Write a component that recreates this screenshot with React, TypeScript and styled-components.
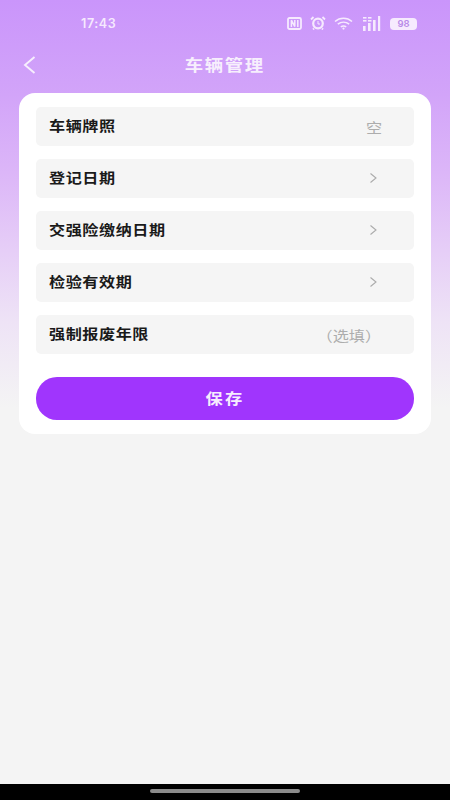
import React from "react";
import styled, { createGlobalStyle } from "styled-components";

const Global = createGlobalStyle`
  html, body { margin: 0; padding: 0; background: #000; }
  * { box-sizing: border-box; }
  body { font-family: "Inter", "Noto Sans CJK SC", sans-serif; }
`;

const Screen = styled.div`
  width: 450px;
  height: 800px;
  display: flex;
  flex-direction: column;
  overflow: hidden;
`;

const Page = styled.div`
  flex: 1;
  display: flex;
  flex-direction: column;
  background: linear-gradient(180deg, #ca95fb 0%, #d2a4f9 12%, #dcb6f8 22%, #e6cef7 32%, #eee3f6 41%, #f4f4f4 52%, #f4f4f4 100%);
`;

const StatusBar = styled.div`
  height: 46px;
  display: flex;
  align-items: center;
  justify-content: space-between;
  padding: 0 33px 0 81px;
  color: #f6eafe;
`;

const Time = styled.span`
  font-size: 12.5px;
  font-weight: 600;
  letter-spacing: 0.6px;
`;

const StatusIcons = styled.div`
  display: flex;
  align-items: center;
  gap: 8px;
`;

const Battery = styled.span`
  width: 27px;
  height: 12px;
  margin-top: 1px;
  border-radius: 4px;
  background: #f6eafe;
  color: #b98be8;
  font-size: 9.5px;
  font-weight: 600;
  line-height: 12px;
  text-align: center;
`;

const NavBar = styled.div`
  height: 38px;
  display: flex;
  align-items: center;
  justify-content: center;
  position: relative;
`;

const BackButton = styled.button`
  position: absolute;
  left: 23px;
  top: 9px;
  padding: 0;
  border: 0;
  background: none;
  display: flex;
`;

const Title = styled.h1`
  margin: 0;
  padding-bottom: 2px;
  color: #f7effd;
  font-size: 16px;
  font-weight: 600;
  letter-spacing: 1.4px;
  transform: scaleX(1.15);
`;

const Card = styled.div`
  margin: 9px 19px 0;
  padding: 14px 17px;
  background: #fff;
  border-radius: 16px;
  display: flex;
  flex-direction: column;
  gap: 13px;
`;

const Row = styled.div`
  height: 39px;
  padding: 0 13px;
  background: #f5f5f5;
  border-radius: 5px;
  display: flex;
  align-items: center;
  justify-content: space-between;
`;

const Label = styled.span`
  padding-bottom: 4px;
  color: #1a1a1a;
  font-size: 14px;
  font-weight: 600;
  letter-spacing: 0.5px;
  transform: scaleX(1.15);
  transform-origin: left center;
`;

const Placeholder = styled.span<{ $right: number }>`
  color: #adadad;
  font-size: 14px;
  margin-right: ${(p) => p.$right}px;
  transform: scaleX(1.15);
  transform-origin: right center;
`;

const Chevron = styled.svg`
  margin: 0 23px 2px 0;
`;

const SaveButton = styled.button`
  margin-top: 10px;
  padding-bottom: 3px;
  height: 43px;
  border: 0;
  border-radius: 21px;
  background: #a035fd;
  color: #f6ecfe;
  font-family: inherit;
  font-size: 15px;
  font-weight: 700;
`;

const SaveLabel = styled.span`
  display: inline-block;
  letter-spacing: 2px;
  transform: scaleX(1.15);
`;

const NavStrip = styled.div`
  height: 16px;
  background: #000;
  display: flex;
  justify-content: center;
  padding-top: 5px;
`;

const HomeBar = styled.div`
  width: 150px;
  height: 3.5px;
  border-radius: 2px;
  background: #8a8a8a;
`;

const ChevronRight = () => (
  <Chevron width="9" height="12" viewBox="0 0 9 12" fill="none">
    <path d="M1.5 1.5 7 6l-5.5 4.5" stroke="#ababab" strokeWidth="1.1" />
  </Chevron>
);

export default function App() {
  return (
    <Screen>
      <Global />
      <Page>
        <StatusBar>
          <Time>17:43</Time>
          <StatusIcons>
            <svg width="15" height="13" viewBox="0 0 15 13" fill="none" stroke="#f6eafe" strokeWidth="1.8">
              <rect x="1" y="1" width="13" height="11" rx="1.5" />
              <path d="M4.4 10V3.2l3.4 6.4V3M10.8 3v7" strokeWidth="1.5" />
            </svg>
            <svg width="16" height="14" viewBox="0 0 16 14" fill="none" stroke="#f6eafe">
              <circle cx="8" cy="7.5" r="4.8" strokeWidth="2.2" />
              <path d="M8 5v3h2" strokeWidth="1" />
              <path d="M1 3.5 3.5 1M15 3.5 12.5 1M4 12.5l-1 1M12 12.5l1 1" strokeWidth="1.8" />
            </svg>
            <svg width="20" height="13" viewBox="0 0 20 13" fill="none" stroke="#f6eafe" strokeWidth="1.5">
              <path d="M1 4.5C6 .2 13 .2 18 4.5M3.8 7.2c3.4-2.7 8-2.7 11.4 0M6.8 9.8c1.8-1.2 3.6-1.2 5.4 0" />
              <circle cx="9.5" cy="11.6" r="1.1" fill="#f6eafe" stroke="none" />
            </svg>
            <svg width="20" height="15" viewBox="0 0 20 15" fill="#f6eafe">
              <rect x="1" y="10" width="2.6" height="5" />
              <rect x="6" y="7" width="2.6" height="8" />
              <rect x="11" y="4" width="2.6" height="11" />
              <rect x="16" y="0" width="2.2" height="15" />
              <rect x="1" y="1" width="3.5" height="1.6" />
              <rect x="6" y="1" width="3.5" height="1.6" />
              <rect x="1" y="4" width="3.5" height="1.6" />
              <rect x="6" y="4" width="3.5" height="1.6" />
            </svg>
            <Battery>98</Battery>
          </StatusIcons>
        </StatusBar>
        <NavBar>
          <BackButton aria-label="返回">
            <svg width="13" height="20" viewBox="0 0 13 20" fill="none">
              <path d="M11.5 2 2 10l9.5 8" stroke="#f7effd" strokeWidth="1.9" />
            </svg>
          </BackButton>
          <Title>车辆管理</Title>
        </NavBar>
        <Card>
          <Row>
            <Label>车辆牌照</Label>
            <Placeholder $right={19}>空</Placeholder>
          </Row>
          <Row>
            <Label>登记日期</Label>
            <ChevronRight />
          </Row>
          <Row>
            <Label>交强险缴纳日期</Label>
            <ChevronRight />
          </Row>
          <Row>
            <Label>检验有效期</Label>
            <ChevronRight />
          </Row>
          <Row>
            <Label>强制报废年限</Label>
            <Placeholder $right={20}>（选填）</Placeholder>
          </Row>
          <SaveButton>
            <SaveLabel>保存</SaveLabel>
          </SaveButton>
        </Card>
      </Page>
      <NavStrip>
        <HomeBar />
      </NavStrip>
    </Screen>
  );
}
